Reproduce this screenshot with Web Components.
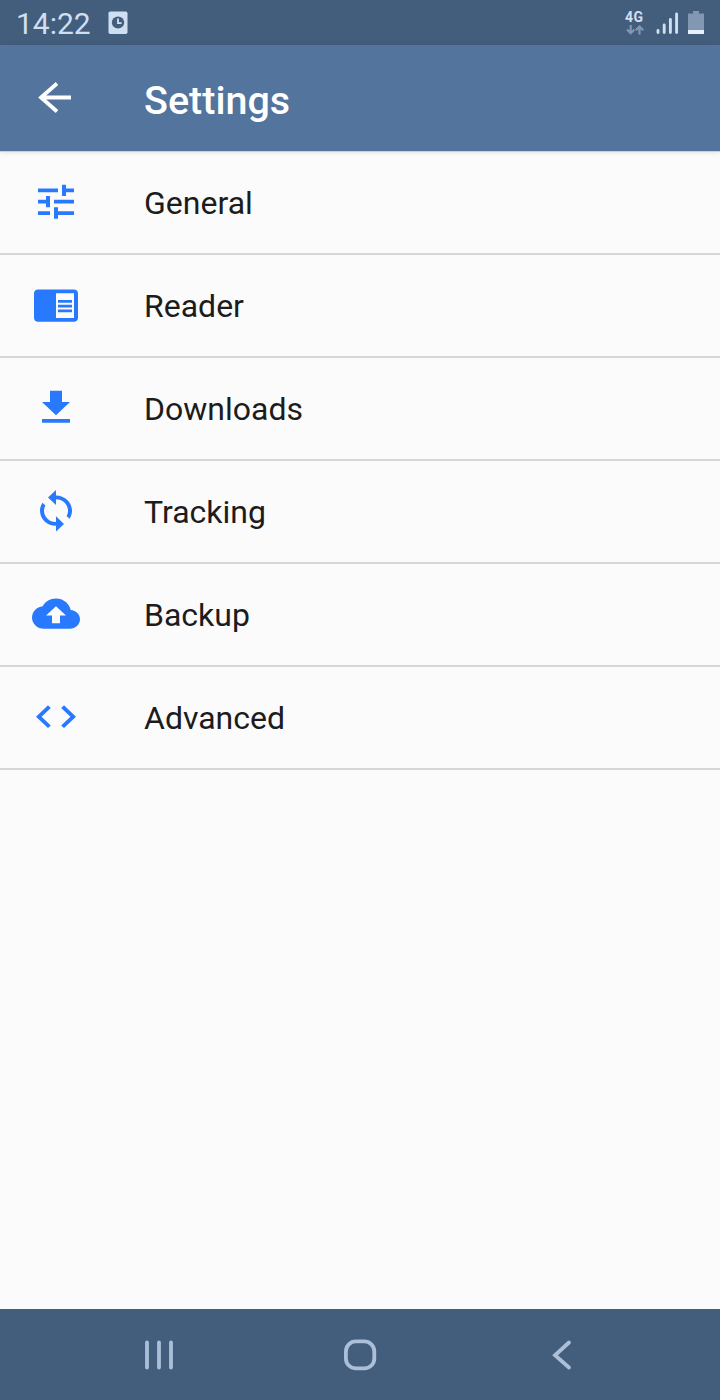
<!DOCTYPE html>
<html lang="en">
<head>
<meta charset="utf-8">
<title>Settings</title>
<style>
  body {
    margin: 0;
    height: 1400px;
    overflow: hidden;
    font-family: Roboto, "Liberation Sans", sans-serif;
    background: #fbfbfb;
  }
</style>
</head>
<body>
  <settings-screen></settings-screen>

  <template id="screenTpl">
    <style>
      :host { display: flex; flex-direction: column; height: 1400px; }
      main { flex: 1; padding-top: 1px; }
    </style>
    <status-bar>14:22</status-bar>
    <tool-bar>Settings</tool-bar>
    <main>
      <pref-row icon="tune">General</pref-row>
      <pref-row icon="reader">Reader</pref-row>
      <pref-row icon="download">Downloads</pref-row>
      <pref-row icon="sync">Tracking</pref-row>
      <pref-row icon="cloud">Backup</pref-row>
      <pref-row icon="code">Advanced</pref-row>
    </main>
    <nav-bar></nav-bar>
  </template>

  <template id="statusTpl">
    <style>
      :host {
        display: flex;
        align-items: flex-start;
        justify-content: space-between;
        height: 45px;
        box-sizing: border-box;
        padding: 0 16px;
        background: #435d7d;
        color: #cfdff2;
      }
      .left, .right { display: flex; }
      .time { width: 92px; padding-top: 1px; font-size: 30px; line-height: 45px; transform: scaleY(.96); }
      svg { display: block; }
      .net { width: 31px; padding-top: 10px; font: bold 14px/15px Roboto, sans-serif; letter-spacing: .5px; }
      .net svg { margin-left: 1px; }
      .bars { margin-top: 12px; }
      .battery { margin: 11px 0 0 9px; }
      .alarm { margin-top: 11px; }
    </style>
    <div class="left">
      <span class="time"><slot></slot></span>
      <svg class="alarm" width="20" height="24" viewBox="0 0 20 24">
        <rect x=".5" y=".5" width="19" height="22.5" rx="1.8" fill="#cfdff2"/>
        <ellipse cx="10" cy="11.5" rx="6.2" ry="5.9" fill="#435d7d"/>
        <path d="M10 7.5v4.6h3.6" fill="none" stroke="#cfdff2" stroke-width="1.8"/>
      </svg>
    </div>
    <div class="right">
      <div class="net">4G
        <svg width="18" height="11" viewBox="0 0 18 11" fill="none" stroke="#8297b2" stroke-width="2.2">
          <path d="M4.7 0v8M1 4.500l3.700 3.700 3.700-3.700M13.500 9.500V2M9.800 5.200L13.500 1.500l3.700 3.700"/>
        </svg>
      </div>
      <svg class="bars" width="23" height="23" viewBox="0 0 23 23" stroke="#cfdff2" stroke-width="2.9" stroke-linecap="round">
        <path d="M2 18.500v2M8.200 13v7.500M14.400 7.500v13M20.600 2v18.500"/>
      </svg>
      <svg class="battery" width="16" height="23" viewBox="0 0 16 23">
        <path d="M5 0h6v2.500h5V20H0V2.500h5z" fill="#8297b2"/>
        <path d="M0 19h16v4H0z" fill="#e6f0fb"/>
      </svg>
    </div>
  </template>

  <template id="toolbarTpl">
    <style>
      :host {
        display: flex;
        align-items: flex-start;
        height: 106px;
        box-sizing: border-box;
        padding-left: 32px;
        position: relative;
        background: #53749c;
        box-shadow: 0 1px 0 #c9d1e0, 0 1px 5px rgba(0, 0, 0, .14);
        color: #fff;
      }
      svg { display: block; margin-top: 30px; }
      span {
        margin: 33px 0 0 66px;
        font-size: 39.5px;
        font-weight: 500;
        line-height: 48px;
        transform: scaleY(.96);
      }
    </style>
    <svg width="46" height="45.4" viewBox="0 0 46 45.4" fill="none" stroke="#fff" stroke-width="3.8">
      <path d="M39 22.500H9M25 8.500L9 22.500l16 14"/>
    </svg>
    <span><slot></slot></span>
  </template>

  <template id="rowTpl">
    <style>
      :host {
        display: flex;
        align-items: center;
        height: 103px;
        box-sizing: border-box;
        padding: 0 32px 2px;
        border-bottom: 2px solid #d6d6d6;
        color: #1c1c1c;
      }
      svg { display: block; width: 48px; height: 45.4px; fill: #2979ff; }
      span {
        margin: 2px 0 0 64px;
        font-size: 32px;
        line-height: 40px;
        transform: scaleY(.96);
      }
    </style>
    <svg viewBox="0 0 24 24" preserveAspectRatio="none"><path/></svg>
    <span><slot></slot></span>
  </template>

  <template id="navTpl">
    <style>
      :host {
        display: grid;
        grid-template-columns: repeat(3, 201px);
        align-items: center;
        height: 91px;
        box-sizing: border-box;
        padding-left: 58px;
        background: #435d7d;
      }
      svg { display: block; margin: 1px auto 0; fill: none; stroke: #abbfd8; stroke-width: 3.8; stroke-linecap: round; }
    </style>
    <svg width="36" height="34" viewBox="0 0 36 34"><path d="M6 4.500v25M18 4.500v25M30 4.500v25"/></svg>
    <svg width="36" height="34" viewBox="0 0 36 34"><rect x="3.900" y="3.400" width="28.400" height="27" rx="10"/></svg>
    <svg width="36" height="34" viewBox="0 0 36 34"><path d="M26 4.500L12 17.300l14 12.200"/></svg>
  </template>

<script>
  // 24x24 icon paths, used by name from <pref-row icon="...">
  const icons = {
    tune: 'M3 17v2h6v-2H3zM3 5v2h10V5H3zm10 16v-2h8v-2h-8v-2h-2v6h2zM7 9v2H3v2h4v2h2V9H7zm14 4v-2H11v2h10zm-6-4h2V7h4V5h-4V3h-2v6z',
    reader: 'M13 12h7v1.500h-7zM13 9.500h7V11h-7zM13 14.500h7V16h-7zM21 4H3c-1.100 0-2 .9-2 2v13c0 1.100.9 2 2 2h18c1.100 0 2-.9 2-2V6c0-1.100-.9-2-2-2zm0 15h-9V6h9v13z',
    download: 'M19 9h-4V3H9v6H5l7 7 7-7zM5 18v2h14v-2H5z',
    sync: 'M12 4V1L8 5l4 4V6c3.310 0 6 2.690 6 6 0 1.010-.25 1.970-.7 2.800l1.460 1.460C19.540 15.030 20 13.570 20 12c0-4.420-3.580-8-8-8zm0 14c-3.310 0-6-2.690-6-6 0-1.010.25-1.970.7-2.800L5.240 7.740C4.460 8.970 4 10.430 4 12c0 4.420 3.580 8 8 8v3l4-4-4-4v3z',
    cloud: 'M19.350 10.040C18.670 6.590 15.640 4 12 4 9.110 4 6.600 5.640 5.350 8.040 2.340 8.360 0 10.910 0 14c0 3.310 2.690 6 6 6h13c2.760 0 5-2.240 5-5 0-2.640-2.050-4.780-4.650-4.960zM14 13v4h-4v-4H7l5-5 5 5h-3z',
    code: 'M9.400 16.600L4.800 12l4.600-4.600L8 6l-6 6 6 6 1.400-1.400zm5.200 0l4.600-4.600-4.600-4.600L16 6l6 6-6 6-1.400-1.400z'
  };

  function define(name, tplId, setup) {
    customElements.define(name, class extends HTMLElement {
      constructor() {
        super();
        const tpl = document.getElementById(tplId);
        this.attachShadow({ mode: 'open' }).appendChild(tpl.content.cloneNode(true));
      }
      connectedCallback() {
        if (setup) setup(this);
      }
    });
  }

  define('status-bar', 'statusTpl');
  define('tool-bar', 'toolbarTpl');
  define('pref-row', 'rowTpl', el => {
    el.shadowRoot.querySelector('path').setAttribute('d', icons[el.getAttribute('icon')]);
  });
  define('nav-bar', 'navTpl');
  define('settings-screen', 'screenTpl');
</script>
</body>
</html>
